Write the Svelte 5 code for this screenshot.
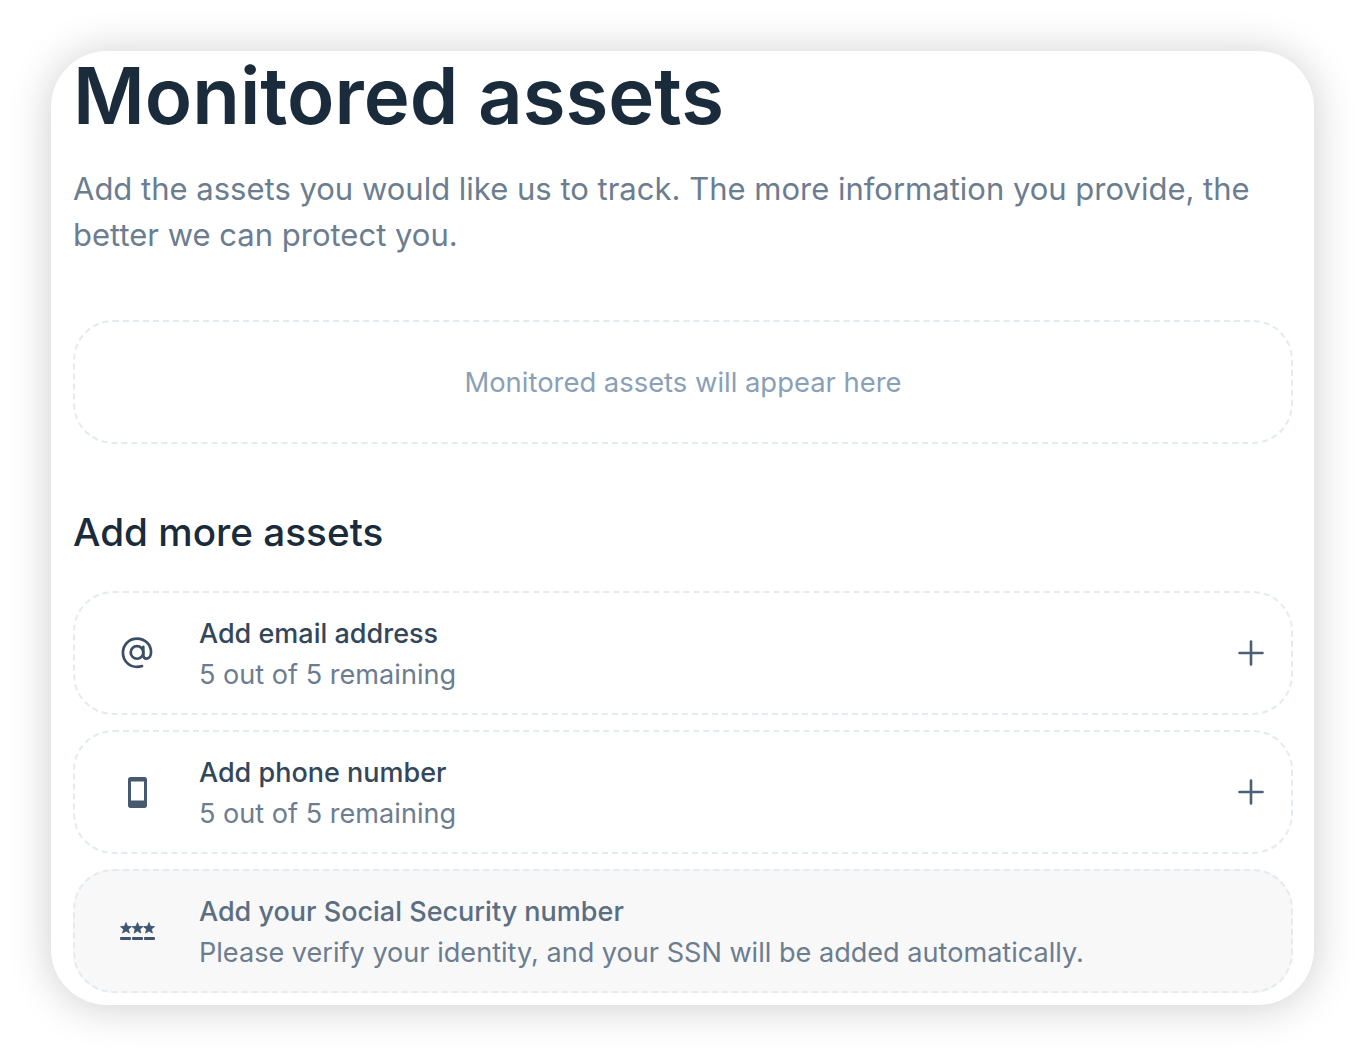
<script lang="ts">
	const assets = [
		{ id: 'email', title: 'Add email address', sub: '5 out of 5 remaining', add: true },
		{ id: 'phone', title: 'Add phone number', sub: '5 out of 5 remaining', add: true },
		{ id: 'ssn', title: 'Add your Social Security number', sub: 'Please verify your identity, and your SSN will be added automatically.', add: false }
	];
	const star = 'l1.500 3.700 4 .3-3.100 2.600 1 3.900-3.400-2.100-3.400 2.100 1-3.900-3.100-2.600 4-.3z';
</script>

<div class="page">
	<main class="card">
		<h1>Monitored assets</h1>
		<p class="lead">Add the assets you would like us to track. The more information you provide, the better we can protect you.</p>

		<div class="empty">Monitored assets will appear here</div>

		<h2>Add more assets</h2>

		<ul class="assets">
			{#each assets as asset}
				<li class="asset" class:disabled={!asset.add}>
					<span class="icon">
						{#if asset.id === 'email'}
							<svg width="36" height="36" viewBox="0 0 32 32" fill="none" stroke="#3a4f66" stroke-width="2.400" stroke-linecap="round">
								<circle cx="16" cy="15.500" r="5.600" />
								<path d="M21.600 10.500v7.200c0 2.200 1.200 3.300 2.900 3.300 2.400 0 4-2.400 4-5.800C28.500 8.500 23 3.200 16 3.200 8.900 3.200 3.500 8.700 3.500 15.800c0 7.200 5.500 12.500 12.500 12.500 1.700 0 3.100-.2 4.500-.7" />
							</svg>
						{:else if asset.id === 'phone'}
							<svg width="19" height="31" viewBox="0 0 19 31">
								<path fill="#46596f" fill-rule="evenodd" d="M2.500 0h14C18 0 19 1 19 2.500v26c0 1.500-1 2.500-2.500 2.500h-14C1 31 0 30 0 28.500v-26C0 1 1 0 2.500 0zM3 4.500v19h13v-19z" />
							</svg>
						{:else}
							<svg width="35" height="19" viewBox="0 0 35 19">
								<g fill="#3f556e" stroke="#3f556e" stroke-width="0.800" stroke-linejoin="round">
									<path d={`M6 .6${star}`} />
									<path d={`M17.500 .6${star}`} />
									<path d={`M29 .6${star}`} />
								</g>
								<g fill="#3f556e">
									<rect x="0" y="15" width="11" height="3" rx="1" />
									<rect x="12" y="15" width="11" height="3" rx="1" />
									<rect x="24" y="15" width="11" height="3" rx="1" />
								</g>
							</svg>
						{/if}
					</span>
					<div class="text">
						<strong>{asset.title}</strong>
						<span>{asset.sub}</span>
					</div>
					{#if asset.add}
						<svg class="plus" width="26" height="26" viewBox="0 0 26 26" stroke="#4a5f78" stroke-width="2.600" stroke-linecap="round">
							<path d="M13 1.500v23M1.500 13h23" />
						</svg>
					{/if}
				</li>
			{/each}
		</ul>
	</main>
</div>

<style>
	:global(body) {
		background: #fff;
	}
	.page {
		height: 1056px;
		box-sizing: border-box;
		padding: 51px;
		font-family: Inter, "Liberation Sans", sans-serif;
		overflow: hidden;
	}
	.card {
		height: 954px;
		box-sizing: border-box;
		padding: 0 21px 0 22px;
		background: #fff;
		border-radius: 56px;
		box-shadow: 0 2px 44px rgba(0, 0, 0, 0.2);
	}
	h1 {
		margin: 0;
		padding-top: 1px;
		font-size: 77.900px;
		line-height: 88px;
		font-weight: 600;
		color: #1a2b3c;
	}
	.lead {
		margin: 26px 0 0;
		font-size: 31px;
		line-height: 46px;
		color: #6b7d8f;
	}
	.empty {
		margin-top: 62px;
		height: 124px;
		box-sizing: border-box;
		display: flex;
		align-items: center;
		justify-content: center;
		border: 2px dashed #e2eaf2;
		border-radius: 40px;
		font-size: 27.400px;
		color: #8aa0b6;
	}
	h2 {
		margin: 62px 0 0;
		font-size: 38.700px;
		line-height: 52px;
		font-weight: 500;
		color: #1a2b3c;
	}
	.assets {
		list-style: none;
		margin: 33px 0 0;
		padding: 0;
		display: flex;
		flex-direction: column;
		gap: 15px;
	}
	.asset {
		height: 124px;
		box-sizing: border-box;
		display: flex;
		align-items: center;
		padding: 0 27px;
		border: 2px dashed #e2eaf2;
		border-radius: 40px;
	}
	.asset.disabled {
		background: #f8f8f8;
	}
	.icon {
		width: 70px;
		margin-right: 27px;
		display: flex;
		justify-content: center;
		flex: none;
	}
	.text {
		flex: 1;
		display: flex;
		flex-direction: column;
		gap: 6px;
		padding-top: 1px;
		font-size: 27.100px;
		line-height: 35px;
	}
	.text strong {
		font-weight: 500;
		font-size: 27px;
		color: #34475a;
	}
	.text span {
		color: #6b7d8f;
	}
	.disabled .text strong {
		color: #5b6e82;
	}
</style>
